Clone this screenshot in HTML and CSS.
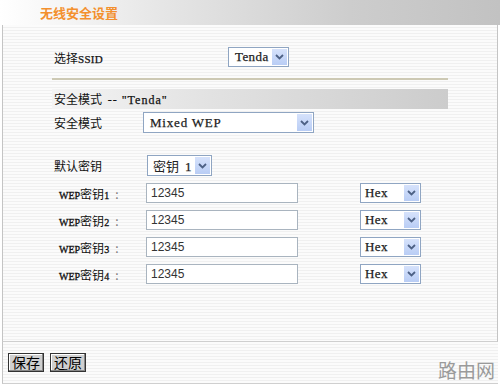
FILE: index.html
```html
<!DOCTYPE html>
<html lang="zh-CN">
<head>
    <meta charset="UTF-8">
    <title>无线安全设置</title>
    <link rel="stylesheet" href="styles.css">
</head>
<body>
    <div class="page">
        <div class="head">无线安全设置</div>
        <div class="panel">
            <div class="form">
                <div class="row row-ssid">
                    <span class="label">选择<span class="mono">SSID</span></span>
                    <span class="sel sel-ssid"><span class="val">Tenda</span><span class="arr"><svg width="9" height="6" viewBox="0 0 9 6"><path d="M1 1 L4.5 4.5 L8 1" fill="none" stroke="#4d6185" stroke-width="1.8"/></svg></span></span>
                </div>
                <div class="rule"></div>
                <div class="band">安全模式 <span class="mono wide">-- "Tenda"</span></div>
                <div class="row row-mode">
                    <span class="label">安全模式</span>
                    <span class="sel sel-mode"><span class="val">Mixed WEP</span><span class="arr"><svg width="9" height="6" viewBox="0 0 9 6"><path d="M1 1 L4.5 4.5 L8 1" fill="none" stroke="#4d6185" stroke-width="1.8"/></svg></span></span>
                </div>
                <div class="row row-def">
                    <span class="label">默认密钥</span>
                    <span class="sel sel-def"><span class="val">密钥 <span class="num">1</span></span><span class="arr"><svg width="9" height="6" viewBox="0 0 9 6"><path d="M1 1 L4.5 4.5 L8 1" fill="none" stroke="#4d6185" stroke-width="1.8"/></svg></span></span>
                </div>
                <div class="keys">
                    <div class="key">
                        <span class="klabel"><span class="small">WEP</span>密钥<span class="small">1</span><span class="colon">:</span></span>
                        <span class="input">12345</span>
                        <span class="sel sel-hex"><span class="val">Hex</span><span class="arr"><svg width="9" height="6" viewBox="0 0 9 6"><path d="M1 1 L4.5 4.5 L8 1" fill="none" stroke="#4d6185" stroke-width="1.8"/></svg></span></span>
                    </div>
                    <div class="key">
                        <span class="klabel"><span class="small">WEP</span>密钥<span class="small">2</span><span class="colon">:</span></span>
                        <span class="input">12345</span>
                        <span class="sel sel-hex"><span class="val">Hex</span><span class="arr"><svg width="9" height="6" viewBox="0 0 9 6"><path d="M1 1 L4.5 4.5 L8 1" fill="none" stroke="#4d6185" stroke-width="1.8"/></svg></span></span>
                    </div>
                    <div class="key">
                        <span class="klabel"><span class="small">WEP</span>密钥<span class="small">3</span><span class="colon">:</span></span>
                        <span class="input">12345</span>
                        <span class="sel sel-hex"><span class="val">Hex</span><span class="arr"><svg width="9" height="6" viewBox="0 0 9 6"><path d="M1 1 L4.5 4.5 L8 1" fill="none" stroke="#4d6185" stroke-width="1.8"/></svg></span></span>
                    </div>
                    <div class="key">
                        <span class="klabel"><span class="small">WEP</span>密钥<span class="small">4</span><span class="colon">:</span></span>
                        <span class="input">12345</span>
                        <span class="sel sel-hex"><span class="val">Hex</span><span class="arr"><svg width="9" height="6" viewBox="0 0 9 6"><path d="M1 1 L4.5 4.5 L8 1" fill="none" stroke="#4d6185" stroke-width="1.8"/></svg></span></span>
                    </div>
                </div>
            </div>
        </div>
        <div class="foot">
            <span class="btn">保存</span>
            <span class="btn">还原</span>
            <span class="mark">路由网</span>
        </div>
    </div>
</body>
</html>
```

FILE: styles.css
```css
*{
    margin: 0px;
    padding: 0px;
    box-sizing: border-box;
}
body{
    font-family: "Noto Sans CJK SC", "Liberation Sans", sans-serif;
    font-size: 12px;
    color: #111;
    background: #fff;
}
.page{
    width: 500px;
    height: 384px;
    overflow: hidden;
}
.head{
    height: 25px;
    padding-left: 40px;
    line-height: 25px;
    font-size: 13px;
    font-weight: bold;
    color: #f3902e;
    background: linear-gradient(to right, #ffffff 0%, #e4e4e4 35%, #cdcdcd 70%, #c2c2c2 100%);
}
.panel{
    height: 317px;
    margin: 0px 2px;
    border-left: 1px solid #c4c4c4;
    border-right: 1px solid #c4c4c4;
    border-bottom: 1px solid #cfcfcf;
    background: repeating-linear-gradient(#fbfbfb 0px, #fbfbfb 2px, #f0f0f0 2px, #f0f0f0 3px);
}
.form{
    width: 396px;
    margin-left: 49px;
    padding-top: 22px;
}
.mono{
    font-family: "Liberation Serif", serif;
    font-size: 11px;
    letter-spacing: 0.3px;
    -webkit-text-stroke: 0.25px #111;
}
.mono.wide{
    padding-left: 3px;
    font-size: 12px;
    letter-spacing: 1px;
}
.row{
    display: flex;
    align-items: center;
}
.label{
    padding-left: 2px;
}
.row-ssid{
    height: 20px;
}
.row-ssid .label{
    width: 176px;
}
.rule{
    height: 2px;
    margin-top: 11px;
    background: #cdc9b4;
}
.band{
    height: 20px;
    margin-top: 9px;
    padding-left: 2px;
    line-height: 20px;
    background: linear-gradient(to right, #f4f4f4 0%, #e2e2e2 40%, #cccccc 100%);
}
.row-mode{
    height: 21px;
    margin-top: 3px;
}
.row-mode .label{
    width: 91px;
}
.row-def{
    height: 21px;
    margin-top: 22px;
}
.row-def .label{
    width: 95px;
}
.sel{
    display: inline-flex;
    align-items: center;
    justify-content: space-between;
    height: 20px;
    padding: 1px;
    border: 1px solid #8fa5c2;
    background: #fff;
}
.sel .val{
    padding-left: 5px;
    font-family: "Liberation Serif", serif;
    font-size: 13px;
    letter-spacing: 0.4px;
    color: #222;
    -webkit-text-stroke: 0.25px #222;
}
.sel .arr{
    display: flex;
    align-items: center;
    justify-content: center;
    width: 15px;
    height: 100%;
    background: linear-gradient(#d6e2fb, #b9cdf5);
}
.sel-ssid{
    width: 61px;
}
.sel-mode{
    width: 171px;
    height: 21px;
}
.sel-mode .val{
    letter-spacing: 0.8px;
}
.sel-def{
    width: 65px;
    height: 21px;
}
.sel-def .val{
    padding-left: 4px;
    font-family: "Noto Sans CJK SC", sans-serif;
    letter-spacing: 0px;
    -webkit-text-stroke: 0px;
}
.sel-def .val .num{
    padding-left: 3px;
    font-family: "Liberation Serif", serif;
    -webkit-text-stroke: 0.25px #222;
}
.sel-hex{
    width: 61px;
}
.sel-hex .val{
    padding-left: 3px;
}
.keys{
    margin-top: 7px;
    display: flex;
    flex-direction: column;
    gap: 7px;
}
.key{
    display: flex;
    align-items: center;
    height: 20px;
}
.klabel{
    width: 94px;
    padding-left: 7px;
    font-size: 12px;
}
.klabel .small{
    font-family: "Liberation Serif", serif;
    font-size: 10px;
    -webkit-text-stroke: 0.3px #111;
}
.klabel .colon{
    color: #777;
    padding-left: 6px;
}
.input{
    width: 152px;
    height: 20px;
    padding-left: 4px;
    line-height: 18px;
    font-family: "Liberation Sans", sans-serif;
    font-size: 12px;
    color: #333;
    border: 1px solid #a9b4bf;
    background: #fff;
}
.key .sel{
    margin-left: 62px;
}
.foot{
    height: 42px;
    margin: 0px 2px;
    padding: 11px 0px 0px 5px;
    display: flex;
    align-items: flex-start;
    gap: 6px;
    border-left: 1px solid #c4c4c4;
    border-bottom: 1px solid #cfcfcf;
    background: repeating-linear-gradient(#fbfbfb 0px, #fbfbfb 2px, #f0f0f0 2px, #f0f0f0 3px);
}
.btn{
    height: 19px;
    padding: 0px 3px;
    line-height: 17px;
    font-size: 14px;
    color: #000;
    background: #cfcfcf;
    border: 1px solid #333;
    box-shadow: inset -1px -1px 0px #888, inset 1px 1px 0px #fff;
}
.mark{
    margin-left: auto;
    margin-right: 3px;
    padding-top: 3px;
    font-size: 19px;
    color: #9a9a9a;
}
```
